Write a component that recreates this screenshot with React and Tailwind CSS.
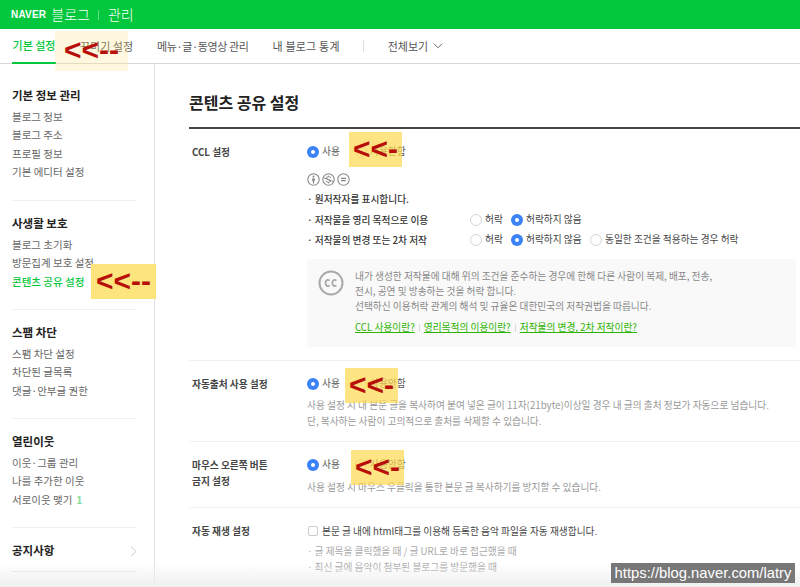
import React from 'react';

const FONT = "font-['Noto_Sans_CJK_KR','Noto_Sans',sans-serif]";

const sideMenu = [
  { title: '기본 정보 관리', items: ['블로그 정보', '블로그 주소', '프로필 정보', '기본 에디터 설정'] },
  { title: '사생활 보호', items: ['블로그 초기화', '방문집계 보호 설정', '콘텐츠 공유 설정'] },
  { title: '스팸 차단', items: ['스팸 차단 설정', '차단된 글목록', '댓글·안부글 권한'] },
  { title: '열린이웃', items: ['이웃·그룹 관리', '나를 추가한 이웃', '서로이웃 맺기'] },
];

function Note({ className, dashes = '--' }) {
  return (
    <div className={`absolute flex items-center justify-center font-['Liberation_Sans',sans-serif] text-[#b80f0a] font-bold leading-none ${className}`}>
      <span className="text-[30px] -mt-[2px]">{'<<'}{dashes}</span>
    </div>
  );
}

function Radio({ on }) {
  if (on) {
    return (
      <span className="w-[12px] h-[12px] rounded-full bg-[#3b82f6] flex items-center justify-center shrink-0">
        <span className="w-[4px] h-[4px] rounded-full bg-white" />
      </span>
    );
  }
  return <span className="w-[12px] h-[12px] rounded-full border border-[#d4d4d4] bg-white shrink-0" />;
}

function Option({ on, label, className = '' }) {
  return (
    <span className={`flex items-center gap-[3px] ${className}`}>
      <Radio on={on} />
      <span className="-mt-[1px]">{label}</span>
    </span>
  );
}

function CcIcon({ kind }) {
  return (
    <svg width="13" height="13" viewBox="0 0 13 13" fill="none" stroke="#8a8a8a">
      <circle cx="6.5" cy="6.5" r="5.7" strokeWidth="1.1" />
      {kind === 'by' && (
        <>
          <circle cx="6.5" cy="3.6" r="1" fill="#8a8a8a" stroke="none" />
          <path d="M5.2 5.2h2.6v3H7.1v2.2H5.9V8.2h-.7z" fill="#8a8a8a" stroke="none" />
        </>
      )}
      {kind === 'nc' && <path d="M9 4.6C8 3.4 4.6 3.3 4.4 5c-.1 1.8 4.3 1.1 4.2 3-.1 1.6-3.6 1.6-4.7.2M6.5 2.6v1M6.5 9.4v1M2 5l9 3.4" strokeWidth="1" />}
      {kind === 'nd' && <path d="M4 5.3h5M4 7.7h5" strokeWidth="1.2" />}
    </svg>
  );
}

export default function App() {
  return (
    <div className={`relative w-[800px] h-[587px] overflow-hidden bg-white ${FONT}`}>
      {/* Header */}
      <header className="h-[29px] bg-[#03c73c] flex items-center pl-[11px] text-white">
        <span className="font-['Liberation_Sans',sans-serif] font-black text-[10px] tracking-[0.2px]">NAVER</span>
        <span className="ml-[5px] text-[14px] font-light">블로그</span>
        <span className="ml-[8px] w-px h-[10px] bg-white/40" />
        <span className="ml-[9px] text-[14px] font-light">관리</span>
      </header>

      {/* Tabs */}
      <nav className="relative h-[35px] border-b border-[#d8d8d8] flex text-[11px] text-[#555] pl-[12px]">
        <a className="relative w-[44px] flex items-center justify-center whitespace-nowrap text-[#03c73c] font-medium border-b-2 border-[#03c73c] h-[35px]">기본 설정</a>
        <a className="ml-[24px] flex items-center whitespace-nowrap">꾸미기 설정</a>
        <a className="ml-[24px] flex items-center whitespace-nowrap tracking-[-0.4px]">메뉴·글·동영상 관리</a>
        <a className="ml-[24px] flex items-center whitespace-nowrap tracking-[0.2px]">내 블로그 통계</a>
        <span className="ml-[23px] self-center w-px h-[12px] bg-[#ddd]" />
        <a className="ml-[24px] flex items-center whitespace-nowrap">
          전체보기
          <svg className="ml-[5px]" width="10" height="6" viewBox="0 0 10 6" fill="none" stroke="#666">
            <path d="M1 .8l4 4 4-4" />
          </svg>
        </a>
      </nav>

      <div className="flex h-[523px]">
        {/* Sidebar */}
        <aside className="w-[155px] shrink-0 border-r border-[#e3e3e3] pl-[12px] pr-[17px] pt-[22px]">
          {sideMenu.map((section) => (
            <section key={section.title} className="border-b border-[#efefef] h-[96px] first:h-[115px] mb-[13px]">
              <h3 className="text-[11.5px] font-bold text-[#222] leading-[18px]">{section.title}</h3>
              <ul className="mt-[4px] text-[10.5px] text-[#666]">
                {section.items.map((item) => (
                  <li key={item} className={`h-[18.4px] leading-[18px] whitespace-nowrap ${item === '콘텐츠 공유 설정' ? 'text-[#03c73c] font-medium' : ''}`}>
                    {item}
                    {item === '서로이웃 맺기' && <span className="ml-[4px] text-[#86dea0] font-bold">1</span>}
                  </li>
                ))}
              </ul>
            </section>
          ))}
          <div className="flex items-center justify-between h-[31px] border-b border-[#e5e5e5] pb-[10px]">
            <h3 className="text-[11.5px] font-bold text-[#222]">공지사항</h3>
            <svg width="7" height="11" viewBox="0 0 7 11" fill="none" stroke="#ccc">
              <path d="M1 .8l5 4.7-5 4.7" />
            </svg>
          </div>
        </aside>

        {/* Main */}
        <main className="flex-1 pl-[34px] text-[9.7px]">
          <h2 className="pt-[26px] h-[65px] text-[16px] font-bold text-[#222] leading-[24px] border-b-2 border-[#444]">콘텐츠 공유 설정</h2>

          {/* CCL */}
          <section className="flex h-[232px] border-b border-[#f0f0f0] pl-[3px] pt-[15px]">
            <h4 className="w-[115px] shrink-0 font-bold text-[#444] leading-[16px]">CCL 설정</h4>
            <div className="flex-1 text-[#555]">
              <div className="flex h-[16px] items-center">
                <Option on label="사용" className="w-[48px]" />
                <Option label="사용안함" />
              </div>
              <div className="flex gap-[2px] mt-[13px] h-[13px]">
                <CcIcon kind="by" />
                <CcIcon kind="nc" />
                <CcIcon kind="nd" />
              </div>
              <p className="mt-[5px] h-[16px] leading-[16px] font-medium text-[#333]">· 원저작자를 표시합니다.</p>
              <div className="flex items-center mt-[5px] h-[16px] text-[#444]">
                <span className="w-[163px] font-medium text-[#333]">· 저작물을 영리 목적으로 이용</span>
                <Option label="허락" className="w-[41px]" />
                <Option on label="허락하지 않음" />
              </div>
              <div className="flex items-center mt-[4px] h-[16px] text-[#444]">
                <span className="w-[163px] font-medium text-[#333]">· 저작물의 변경 또는 2차 저작</span>
                <Option label="허락" className="w-[41px]" />
                <Option on label="허락하지 않음" className="w-[79px]" />
                <Option label="동일한 조건을 적용하는 경우 허락" />
              </div>
              <div className="flex mt-[11px] h-[88px] mr-[4px] bg-[#f9f9f9] pl-[11px] pt-[10px] text-[#888] leading-[14.8px]">
                <svg className="shrink-0 mt-[1px]" width="26" height="26" viewBox="0 0 26 26" fill="none" stroke="#a8a8a8">
                  <circle cx="13" cy="13" r="11.5" strokeWidth="2" />
                  <path d="M11.6 10.6c-1.6-1.5-4.1-.6-4.1 2.4s2.5 3.9 4.1 2.4M18.4 10.6c-1.6-1.5-4.1-.6-4.1 2.4s2.5 3.9 4.1 2.4" strokeWidth="1.8" />
                </svg>
                <div className="ml-[11px]">
                  <p>내가 생성한 저작물에 대해 위의 조건을 준수하는 경우에 한해 다른 사람이 복제, 배포, 전송,</p>
                  <p>전시, 공연 및 방송하는 것을 허락 합니다.</p>
                  <p>선택하신 이용허락 관계의 해석 및 규율은 대한민국의 저작권법을 따릅니다.</p>
                  <p className="mt-[7px] flex items-center text-[#2db400]">
                    <a className="underline">CCL 사용이란?</a>
                    <span className="mx-[4px] w-px h-[8px] bg-[#ddd]" />
                    <a className="underline">영리목적의 이용이란?</a>
                    <span className="mx-[4px] w-px h-[8px] bg-[#ddd]" />
                    <a className="underline">저작물의 변경, 2차 저작이란?</a>
                  </p>
                </div>
              </div>
            </div>
          </section>

          {/* Auto source */}
          <section className="flex h-[81px] border-b border-[#f0f0f0] pl-[3px] pt-[15px]">
            <h4 className="w-[115px] shrink-0 font-bold text-[#444] leading-[16px]">자동출처 사용 설정</h4>
            <div className="flex-1 text-[#555]">
              <div className="flex h-[16px] items-center">
                <Option on label="사용" className="w-[48px]" />
                <Option label="사용안함" />
              </div>
              <p className="mt-[6px] text-[#999] leading-[15.5px] whitespace-nowrap">
                사용 설정 시 내 본문 글을 복사하여 붙여 넣은 글이 11자(21byte)이상일 경우 내 글의 출처 정보가 자동으로 넘습니다.<br />
                단, 복사하는 사람이 고의적으로 출처를 삭제할 수 있습니다.
              </p>
            </div>
          </section>

          {/* Right click */}
          <section className="flex h-[66px] border-b border-[#f0f0f0] pl-[3px] pt-[15px]">
            <h4 className="w-[115px] shrink-0 font-bold text-[#444] leading-[16px]">마우스 오른쪽 버튼<br />금지 설정</h4>
            <div className="flex-1 text-[#555]">
              <div className="flex h-[16px] items-center">
                <Option on label="사용" className="w-[48px]" />
                <Option label="사용안함" />
              </div>
              <p className="mt-[7px] text-[#999] leading-[15.5px]">사용 설정 시 마우스 우클릭을 통한 본문 글 복사하기를 방지할 수 있습니다.</p>
            </div>
          </section>

          {/* Auto play */}
          <section className="flex pl-[3px] pt-[15px]">
            <h4 className="w-[115px] shrink-0 font-bold text-[#444] leading-[16px]">자동 재생 설정</h4>
            <div className="flex-1">
              <div className="flex h-[16px] items-center gap-[4px] text-[#444]">
                <span className="ml-[1px] w-[10px] h-[10px] rounded-[2px] border border-[#ccc] bg-white" />
                <span>본문 글 내에 html태그를 이용해 등록한 음악 파일을 자동 재생합니다.</span>
              </div>
              <ul className="mt-[5px] text-[#aaa] leading-[15.5px]">
                <li>· 글 제목을 클릭했을 때 / 글 URL로 바로 접근했을 때</li>
                <li>· 최신 글에 음악이 첨부된 블로그를 방문했을 때</li>
              </ul>
            </div>
          </section>
        </main>
      </div>

      {/* Bottom fade of the screenshot */}
      <div className="absolute left-0 right-0 bottom-0 h-[24px] bg-gradient-to-b from-transparent to-[#efefef]" />

      {/* Annotations pasted on the screenshot */}
      <Note className="left-[55px] top-[31px] w-[73px] h-[40px] bg-[#fee47c]/25" />
      <Note className="left-[91px] top-[264px] w-[65px] h-[35px] bg-[#fee47c]" />
      <Note className="left-[349px] top-[132px] w-[53px] h-[35px] bg-[#fdd94f]/70" dashes="-" />
      <Note className="left-[345px] top-[368px] w-[53px] h-[35px] bg-[#fdd94f]/70" dashes="-" />
      <Note className="left-[351px] top-[450px] w-[53px] h-[35px] bg-[#fdd94f]/70" dashes="-" />

      {/* Watermark */}
      <div className="absolute left-[611px] top-[563px] w-[184px] h-[20px] flex items-center justify-center bg-[#777] text-white font-['Liberation_Sans',sans-serif] text-[14.8px] whitespace-nowrap">
        https://blog.naver.com/latry
      </div>
    </div>
  );
}
